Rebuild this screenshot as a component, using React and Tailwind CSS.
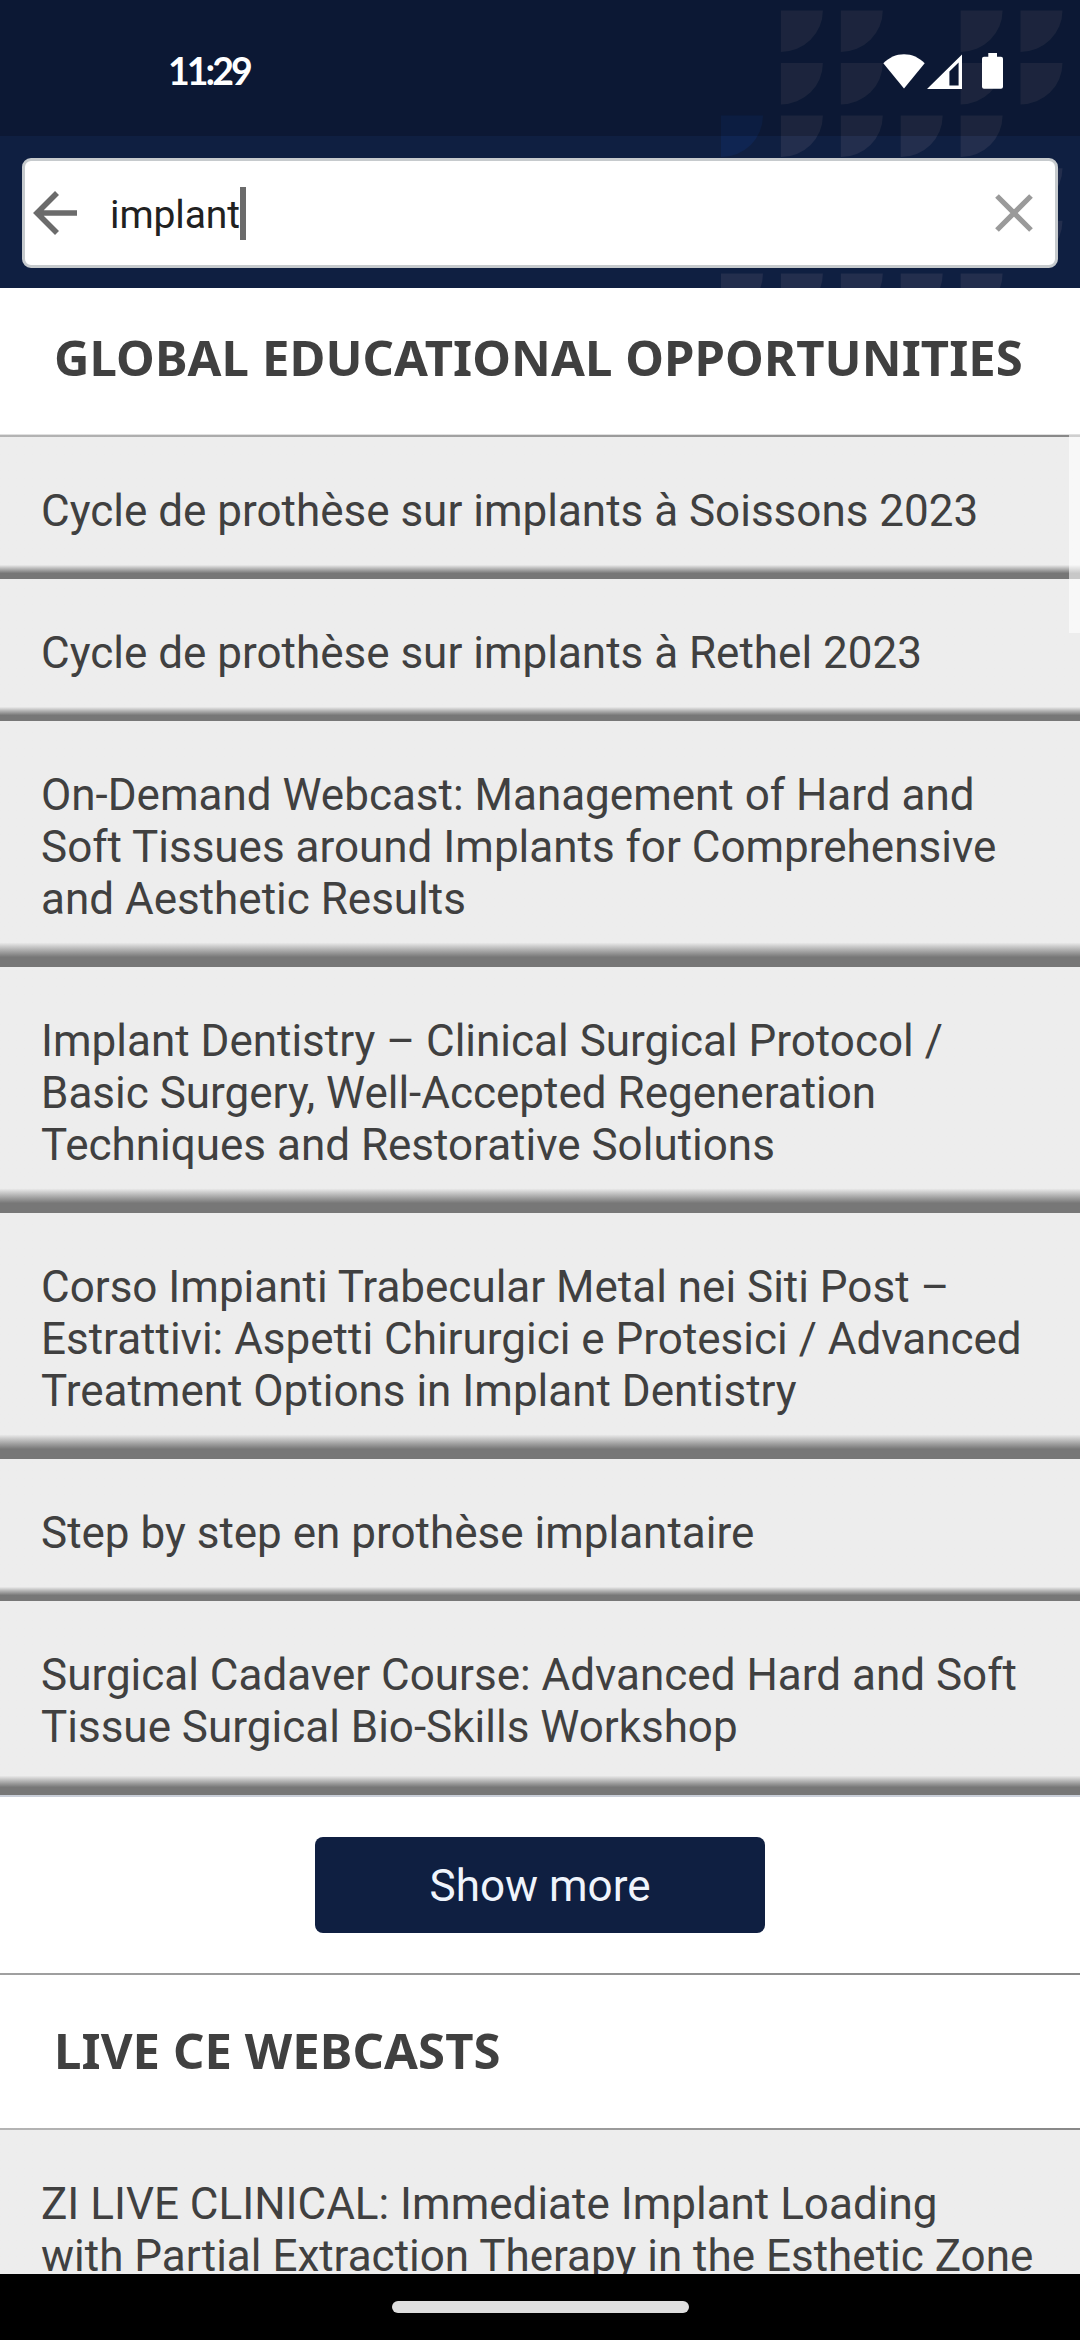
import React, { useState } from 'react';

const educationResults = [
  ['Cycle de prothèse sur implants à Soissons 2023'],
  ['Cycle de prothèse sur implants à Rethel 2023'],
  [
    'On-Demand Webcast: Management of Hard and',
    'Soft Tissues around Implants for Comprehensive',
    'and Aesthetic Results',
  ],
  [
    'Implant Dentistry – Clinical Surgical Protocol /',
    'Basic Surgery, Well-Accepted Regeneration',
    'Techniques and Restorative Solutions',
  ],
  [
    'Corso Impianti Trabecular Metal nei Siti Post –',
    'Estrattivi: Aspetti Chirurgici e Protesici / Advanced',
    'Treatment Options in Implant Dentistry',
  ],
  ['Step by step en prothèse implantaire'],
  [
    'Surgical Cadaver Course: Advanced Hard and Soft',
    'Tissue Surgical Bio-Skills Workshop',
  ],
];

const webcastResults = [
  [
    'ZI LIVE CLINICAL: Immediate Implant Loading',
    'with Partial Extraction Therapy in the Esthetic Zone',
  ],
];

// [column, row] of every petal in the header pattern
const petals = [
  [1, 0], [2, 0], [4, 0], [5, 0],
  [1, 1], [2, 1], [4, 1], [5, 1],
  [1, 2], [2, 2], [3, 2], [4, 2],
  [5, 3], [5, 4],
  [0, 5], [1, 5], [2, 5], [3, 5], [4, 5],
];

const HeaderPattern = () => (
  <svg className="absolute top-0 right-0" width="380" height="288" viewBox="700 0 380 288">
    {petals.map(([col, row]) => (
      <path
        key={`${col}-${row}`}
        d="M0 0H42A42 41.5 0 0 1 0 41.5Z"
        fill="#232e4d"
        transform={`translate(${721 + col * 59.9} ${10.4 + row * 52.6})`}
      />
    ))}
    <path d="M0 0H42A42 41.5 0 0 1 0 41.5Z" fill="#0f2552" transform="translate(721 115.6)" />
  </svg>
);

const StatusBar = () => (
  <div className="relative h-[136px] bg-black/20 flex items-start justify-between pl-[168px] pr-[77px] text-white">
    <span className="mt-[48px] h-[45px] leading-[45px] font-['Lato'] font-bold text-[37.5px] tracking-[-3px]">11:29</span>
    <div className="flex items-center mt-[53px] h-[36px]">
      <svg width="42" height="35" viewBox="0 0 42 35" fill="#fff">
        <path d="M21 34.5L0.3 9.3C6 3.6 13 0.3 21 0.3S36 3.6 41.7 9.3Z" />
      </svg>
      <svg className="ml-[2px]" width="35" height="35" viewBox="0 0 35 35" fill="#fff">
        <path fillRule="evenodd" d="M0 35L35 0.5V35ZM22.4 17.5V31.5H31.6V8.4Z" />
      </svg>
      <svg className="ml-[20px]" width="21" height="36" viewBox="0 0 21 36" fill="#fff">
        <path d="M6.3 0H15V3.7H19Q21 3.7 21 5.7V33.7Q21 35.7 19 35.7H2Q0 35.7 0 33.7V5.7Q0 3.7 2 3.7H6.3Z" />
      </svg>
    </div>
  </div>
);

const SearchBox = ({ query, onClear }) => (
  <div className="relative mt-[22px] mx-[22px] h-[110px] flex items-center bg-white border-[3px] border-[#c6cacd] rounded-[9px]">
    <svg className="ml-[8px]" width="44" height="44" viewBox="0 0 44 44" fill="none" stroke="#6b6b6b" strokeWidth="5.6">
      <path d="M44 22H4M24 2L4 22L24 42" />
    </svg>
    <span className="ml-[33px] pt-[3px] font-['Roboto'] text-[39px] leading-[46px] tracking-[-0.1px] text-[#212121]">{query}</span>
    <span className="w-[6px] h-[53px] bg-[#6b6b6b]" />
    <button className="ml-auto mr-[22px]" onClick={onClear}>
      <svg width="38" height="38" viewBox="0 0 38 38" stroke="#9a9a9a" strokeWidth="5.2">
        <path d="M2 2L36 36M36 2L2 36" />
      </svg>
    </button>
  </div>
);

const SectionTitle = ({ children }) => (
  <h2 className="pl-[54px] font-['Noto_Sans'] font-bold text-[49px] leading-[60px] tracking-[0.09px] text-[#404040] whitespace-nowrap">
    {children}
  </h2>
);

const ResultRow = ({ lines }) => (
  <li className="pt-[48px] pb-[42px] pl-[41px] bg-linear-to-b from-[#ededed] from-90% to-[#777777] to-96% font-['Roboto'] text-[44px] leading-[52px] text-[#404040] whitespace-nowrap">
    {lines.map((line) => (
      <div key={line}>{line}</div>
    ))}
  </li>
);

const App = () => {
  const [query, setQuery] = useState('implant');

  return (
    <div className="w-[1080px] h-[2340px] flex flex-col overflow-hidden bg-white">
      <header className="relative h-[288px] shrink-0 bg-[#0f1f41]">
        <HeaderPattern />
        <StatusBar />
        <SearchBox query={query} onClear={() => setQuery('')} />
      </header>

      <main className="relative h-[1986px] shrink-0 overflow-hidden">
        <div className="h-[146px] pt-[39px]">
          <SectionTitle>GLOBAL EDUCATIONAL OPPORTUNITIES</SectionTitle>
        </div>
        <div className="h-px bg-[#e0e0e0]" />
        <div className="h-[2px] bg-linear-to-r from-[#b4b4b4] to-[#888888]" />
        <ul>
          {educationResults.map((lines) => (
            <ResultRow key={lines[0]} lines={lines} />
          ))}
        </ul>

        <div className="h-[2px] bg-[#c9ced8]" />
        <div className="h-[176px] pt-[40px] flex justify-center items-start">
          <button className="w-[450px] h-[96px] pt-[2px] rounded-[8px] bg-[#0f1f41] font-['Roboto'] text-[44px] leading-[52px] text-[#eff4fc]">
            Show more
          </button>
        </div>

        <div className="h-[2px] bg-linear-to-r from-[#a0a0a0] to-[#888888]" />
        <div className="h-[153px] pt-[45px]">
          <SectionTitle>LIVE CE WEBCASTS</SectionTitle>
        </div>
        <div className="h-[2px] bg-linear-to-r from-[#b4b4b4] to-[#888888]" />
        <ul>
          {webcastResults.map((lines) => (
            <ResultRow key={lines[0]} lines={lines} />
          ))}
        </ul>

        {/* scroll thumb */}
        <div className="absolute right-0 top-[147px] w-[11px] h-[198px] bg-white/60" />
      </main>

      <footer className="h-[66px] shrink-0 bg-black flex justify-center items-start pt-[27px]">
        <div className="w-[297px] h-[12px] rounded-full bg-[#dedede]" />
      </footer>
    </div>
  );
};

export default App;
